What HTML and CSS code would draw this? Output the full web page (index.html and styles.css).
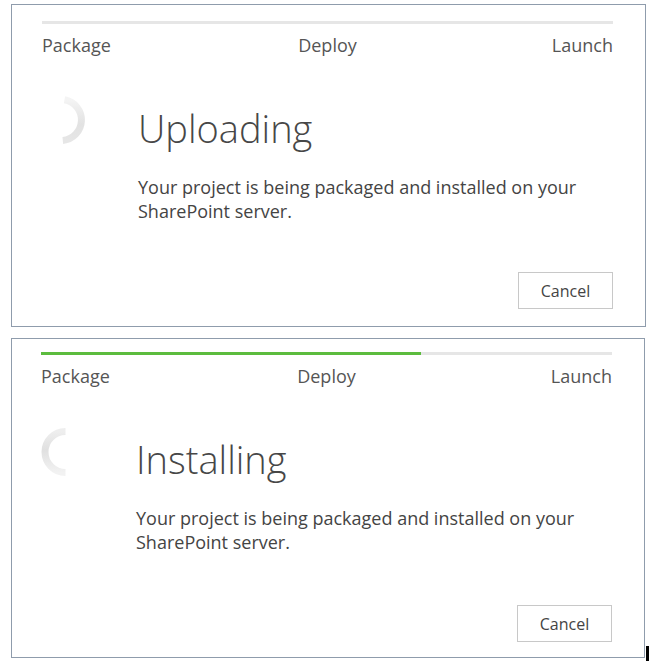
FILE: index.html
```html
<!DOCTYPE html>
<html>
<head>
<meta charset="utf-8">
<link rel="stylesheet" href="styles.css">
</head>
<body>
<div class="dialog">
  <div class="steps">
    <div class="track"><div class="fill" style="width:0%"></div></div>
    <div class="labels"><span class="lbl-start">Package</span><span>Deploy</span><span class="lbl-end">Launch</span></div>
  </div>
  <div class="main">
    <svg class="spinner" width="50" height="50" viewBox="0 0 50 50">
      <defs>
        <linearGradient id="g1" x1="0" y1="0" x2="0" y2="1">
          <stop offset="0" stop-color="#f4f4f4"/>
          <stop offset="0.6" stop-color="#e2e2e2"/>
          <stop offset="1" stop-color="#e6e6e6"/>
        </linearGradient>
      </defs>
      <path d="M28.5 4.8 A20.5 20.5 0 0 1 26.8 45.4" fill="none" stroke="url(#g1)" stroke-width="7"/>
    </svg>
    <div class="content">
      <h1 class="title">Uploading</h1>
      <p class="desc">Your project is being packaged and installed on your SharePoint server.</p>
    </div>
  </div>
  <div class="actions"><button class="btn">Cancel</button></div>
</div>
<div class="dialog dialog-second">
  <div class="steps">
    <div class="track"><div class="fill" style="width:66.5%"></div></div>
    <div class="labels"><span class="lbl-start">Package</span><span>Deploy</span><span class="lbl-end">Launch</span></div>
  </div>
  <div class="main">
    <svg class="spinner" width="50" height="50" viewBox="0 0 50 50">
      <defs>
        <linearGradient id="g2" x1="0" y1="0" x2="0" y2="1">
          <stop offset="0" stop-color="#eeeeee"/>
          <stop offset="0.45" stop-color="#e0e0e0"/>
          <stop offset="1" stop-color="#f2f2f2"/>
        </linearGradient>
      </defs>
      <path d="M25.5 4.5 A20.5 20.5 0 1 0 25.5 45.5" fill="none" stroke="url(#g2)" stroke-width="7"/>
    </svg>
    <div class="content">
      <h1 class="title">Installing</h1>
      <p class="desc">Your project is being packaged and installed on your SharePoint server.</p>
    </div>
  </div>
  <div class="actions"><button class="btn">Cancel</button><span class="caret"></span></div>
</div>
</body>
</html>
```
FILE: styles.css
```css
html, body {
  margin: 0;
  padding: 0;
  background: #ffffff;
}
body {
  padding: 4px 0 0 11px;
  font-family: "Open Sans", "Noto Sans", sans-serif;
  color: #444;
}
.dialog {
  box-sizing: border-box;
  width: 635px;
  height: 323px;
  border: 1px solid #8f9cac;
  padding: 16px 32px 0 19px;
  margin-bottom: 11px;
  display: flex;
  flex-direction: column;
  position: relative;
}
.steps {
  margin-left: 11px;
}
.track {
  height: 3px;
  background: #e6e6e6;
}
.fill {
  height: 3px;
  background: #5cbc3e;
}
.labels {
  display: grid;
  grid-template-columns: 1fr auto 1fr;
  margin-top: 10px;
  font-size: 18px;
  line-height: 22px;
  color: #555;
}
.lbl-start { justify-self: start; }
.lbl-end { justify-self: end; }
.main {
  display: flex;
  margin-top: 36px;
}
.spinner {
  flex: none;
  display: block;
  margin-left: 5px;
  margin-top: 3px;
}
.content {
  margin-left: 52px;
  margin-top: 10px;
}
.title {
  margin: 0;
  font-weight: 300;
  font-size: 38px;
  line-height: 52px;
  color: #474747;
}
.desc {
  margin: 21px 0 0;
  width: 460px;
  font-size: 18px;
  line-height: 24px;
  color: #444;
}
.actions {
  margin-top: auto;
  margin-bottom: 17px;
  display: flex;
  justify-content: flex-end;
}
.btn {
  width: 95px;
  height: 37px;
  border: 1px solid #c8c8c8;
  background: #fff;
  font-family: "Open Sans", "Noto Sans", sans-serif;
  font-size: 16px;
  color: #444;
  padding: 0;
}
.dialog-second {
  width: 634px;
  height: 320px;
  padding-top: 13px;
}
.dialog-second .steps {
  margin-left: 10px;
}
.dialog-second .main {
  margin-top: 39px;
}
.dialog-second .spinner {
  margin-left: 9px;
  margin-top: 1px;
}
.dialog-second .content {
  margin-left: 46px;
  margin-top: 7px;
}
.dialog-second .actions {
  margin-bottom: 15px;
}
.caret {
  position: absolute;
  right: -5px;
  bottom: -4px;
  width: 3px;
  height: 15px;
  background: #000;
}
```
